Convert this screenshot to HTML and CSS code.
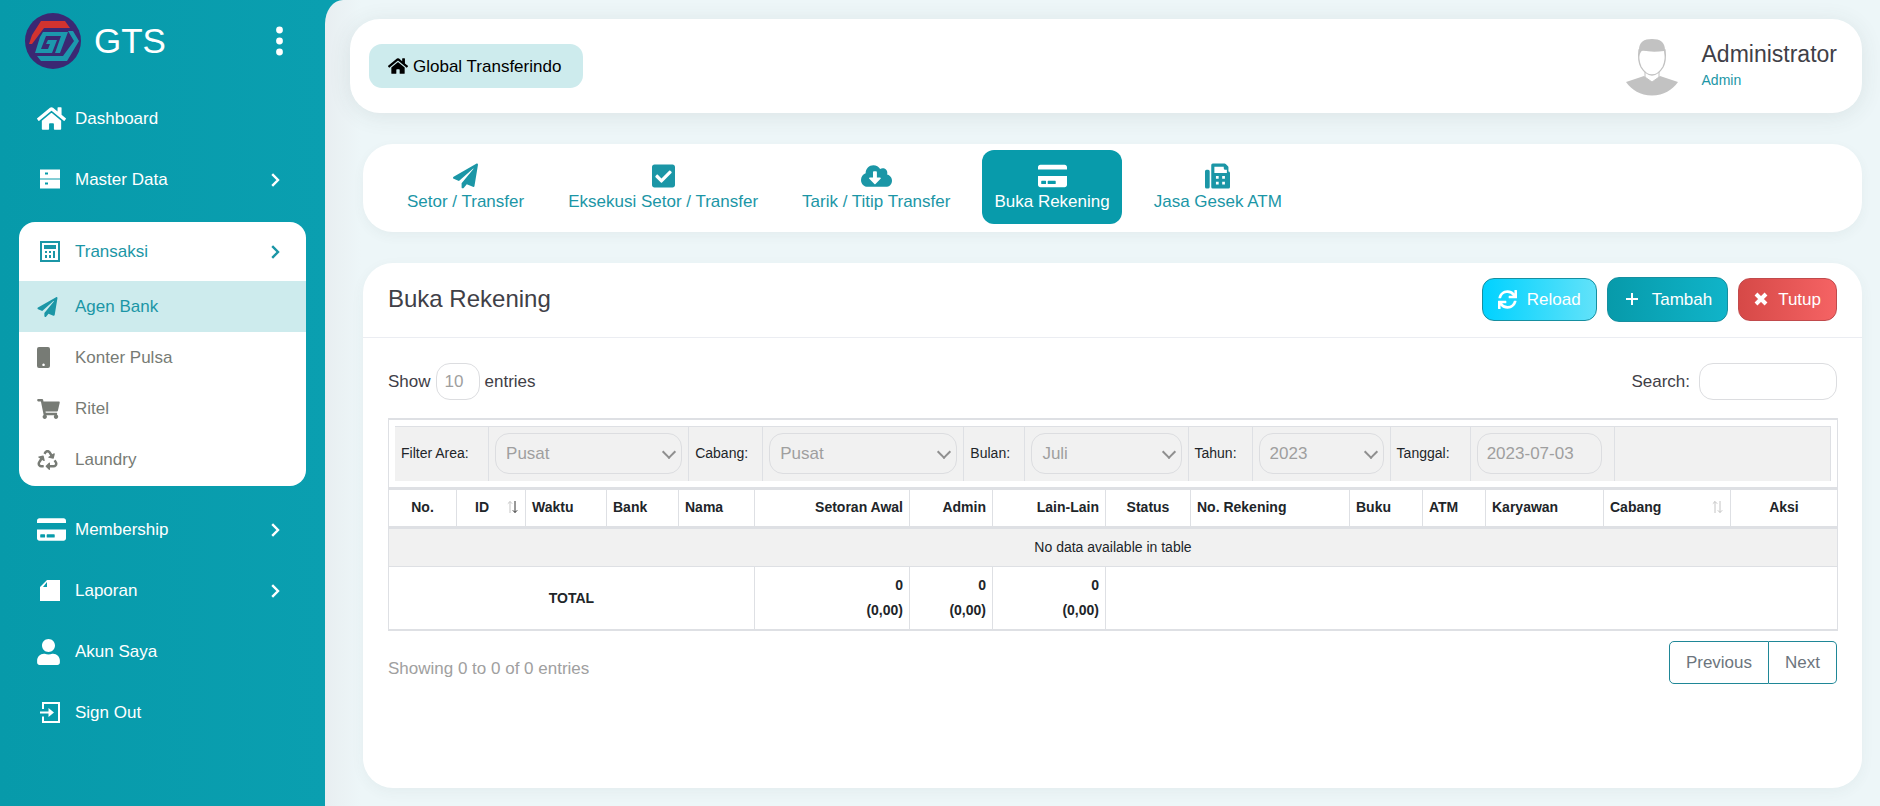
FILE: index.html
```html
<!DOCTYPE html>
<html lang="id">
<head>
<meta charset="utf-8">
<title>GTS - Buka Rekening</title>
<link rel="stylesheet" href="styles.css">
</head>
<body>
<svg class="sprite" aria-hidden="true">
  <symbol id="home" viewBox="0 32 576 448"><path d="M280.37 148.26L96 300.11V464a16 16 0 0 0 16 16l112.06-.29a16 16 0 0 0 15.92-16V368a16 16 0 0 1 16-16h64a16 16 0 0 1 16 16v95.64a16 16 0 0 0 16 16.05L464 480a16 16 0 0 0 16-16V300L295.67 148.26a12.19 12.19 0 0 0-15.3 0zM571.6 251.47L488 182.56V44.05a12 12 0 0 0-12-12h-56a12 12 0 0 0-12 12v72.61L318.47 43a48 48 0 0 0-61 0L4.34 251.47a12 12 0 0 0-1.6 16.9l25.5 31A12 12 0 0 0 45.15 301l235.22-193.74a12.19 12.19 0 0 1 15.3 0L530.9 301a12 12 0 0 0 16.9-1.6l25.5-31a12 12 0 0 0-1.7-16.93z"/></symbol>
  <symbol id="plane" viewBox="0 0 512 512"><path d="M476 3.2L12.5 270.6c-18.1 10.4-15.8 35.6 2.2 43.2L121 358.4l287.3-253.2c5.5-4.9 13.3 2.6 8.6 8.3L176 407v80.5c0 23.6 28.5 32.9 42.5 15.8L282 426l124.6 52.2c14.2 6 30.4-2.9 33-18.2l72-432C515 7.8 493.3-6.8 476 3.2z"/></symbol>
  <symbol id="card" viewBox="0 32 576 448"><path d="M0 432c0 26.5 21.5 48 48 48h480c26.5 0 48-21.5 48-48V256H0v176zm192-68c0-6.6 5.4-12 12-12h136c6.6 0 12 5.4 12 12v40c0 6.6-5.4 12-12 12H204c-6.6 0-12-5.4-12-12v-40zm-128 0c0-6.6 5.4-12 12-12h72c6.6 0 12 5.4 12 12v40c0 6.6-5.4 12-12 12H76c-6.6 0-12-5.4-12-12v-40zM576 80v48H0V80c0-26.5 21.5-48 48-48h480c26.5 0 48 21.5 48 48z"/></symbol>
  <symbol id="server" viewBox="0 0 20 20"><path fill-rule="evenodd" d="M0 0h20v9H0zM5 3v2h3V3zM0 10h20v9H0zM5 13v2h3v-2z"/></symbol>
  <symbol id="calculator" viewBox="0 0 20 21"><path fill-rule="evenodd" d="M0 0h20v21H0zM2 2v17h16V2zM4 4h12v4H4zM5 10h2v2H5zM9 10h2v2H9zM13 10h2v7h-2zM5 14h2v3H5zM9 14h2v3H9z"/></symbol>
  <symbol id="mobile" viewBox="0 0 13 21"><path fill-rule="evenodd" d="M2 0h9a2 2 0 0 1 2 2v17a2 2 0 0 1-2 2H2a2 2 0 0 1-2-2V2a2 2 0 0 1 2-2zM6.500 16.500a1.300 1.300 0 1 0 .1 0z"/></symbol>
  <symbol id="cart" viewBox="0 0 576 512"><path d="M528.12 301.319l47.273-208C578.806 78.301 567.391 64 551.99 64H159.208l-9.166-44.81C147.758 8.021 137.93 0 126.529 0H24C10.745 0 0 10.745 0 24v16c0 13.255 10.745 24 24 24h69.883l70.248 343.435C147.325 417.1 136 435.222 136 456c0 30.928 25.072 56 56 56s56-25.072 56-56c0-15.674-6.447-29.835-16.824-40h209.647C430.447 426.165 424 440.326 424 456c0 30.928 25.072 56 56 56s56-25.072 56-56c0-22.172-12.888-41.332-31.579-50.405l5.517-24.276c3.413-15.018-8.002-29.319-23.403-29.319H218.117l-6.545-32h293.145c11.206 0 20.92-7.754 23.403-18.681z"/></symbol>
  <symbol id="recycle" viewBox="0 0 512 512"><path d="M184.561 261.903c3.232 13.997-12.123 24.635-24.068 17.168l-40.736-25.455-50.867 81.402C55.606 356.273 70.96 384 96.012 384H148c6.627 0 12 5.373 12 12v40c0 6.627-5.373 12-12 12H96.115c-75.334 0-121.302-83.048-81.408-146.88l50.822-81.388-40.725-25.448c-12.081-7.547-8.966-25.961 4.879-29.158l110.237-25.45c8.611-1.988 17.201 3.381 19.189 11.99l25.452 110.237zm98.561-182.915l41.289 66.076-40.74 25.457c-12.051 7.528-9 25.953 4.879 29.158l110.237 25.45c8.672 1.999 17.215-3.438 19.189-11.99l25.45-110.237c3.197-13.844-11.99-24.719-24.068-17.168l-40.687 25.424-41.263-66.082c-37.521-60.033-125.209-60.171-162.816 0l-17.963 28.766c-3.51 5.62-1.8 13.021 3.82 16.533l33.919 21.195c5.62 3.512 13.024 1.803 16.536-3.817l17.961-28.743c12.712-20.341 41.973-19.676 54.257-.022zM497.288 301.12l-27.515-44.065c-3.511-5.623-10.916-7.334-16.538-3.821l-33.861 21.159c-5.62 3.512-7.33 10.915-3.818 16.536l27.564 44.112c13.257 21.211-2.057 48.96-27.136 48.96H320V336.02c0-14.213-17.242-21.383-27.313-11.313l-80 79.981c-6.249 6.248-6.249 16.379 0 22.627l80 79.989C302.689 517.308 320 510.3 320 495.989V448h95.88c75.274 0 121.335-82.997 81.408-146.88z"/></symbol>
  <symbol id="file" viewBox="0 0 20 21"><path fill-rule="evenodd" d="M7 0h13v21H0V7zM7 2L3 7h4z"/></symbol>
  <symbol id="user" viewBox="0 0 448 512"><path d="M224 256c70.7 0 128-57.3 128-128S294.7 0 224 0 96 57.3 96 128s57.3 128 128 128zm89.6 32h-16.7c-22.2 10.2-46.9 16-72.9 16s-50.6-5.8-72.9-16h-16.7C60.2 288 0 348.2 0 422.4V464c0 26.5 21.5 48 48 48h352c26.5 0 48-21.5 48-48v-41.6c0-74.2-60.2-134.4-134.4-134.4z"/></symbol>
  <symbol id="signout" viewBox="0 0 20 21"><path d="M2 0h18v21H2v-6.500h2V19h14V2H4v5H2zM0 9.500h8.500V6l5.500 4.500L8.500 15v-3.500H0z"/></symbol>
  <symbol id="chevron" viewBox="0 0 9 14"><path d="M1.200 1.200L7 7l-5.800 5.800" fill="none" stroke="currentColor" stroke-width="2.400"/></symbol>
  <symbol id="dots" viewBox="0 0 8 30"><circle cx="4" cy="4" r="3.400"/><circle cx="4" cy="15" r="3.400"/><circle cx="4" cy="26" r="3.400"/></symbol>
  <symbol id="check" viewBox="0 32 448 448"><path d="M400 480H48c-26.510 0-48-21.490-48-48V80c0-26.510 21.490-48 48-48h352c26.510 0 48 21.490 48 48v352c0 26.510-21.490 48-48 48zm-204.686-98.059l184-184c6.248-6.248 6.248-16.379 0-22.627l-22.627-22.627c-6.248-6.248-16.379-6.249-22.628 0L184 302.745l-70.059-70.059c-6.248-6.248-16.379-6.248-22.628 0l-22.627 22.627c-6.248 6.248-6.248 16.379 0 22.627l104 104c6.249 6.250 16.379 6.250 22.628.001z"/></symbol>
  <symbol id="cloud" viewBox="0 32 640 448"><path d="M537.6 226.6c4.1-10.7 6.4-22.4 6.4-34.6 0-53-43-96-96-96-19.7 0-38.1 6-53.3 16.2C367 64.2 315.3 32 256 32c-88.4 0-160 71.6-160 160 0 2.7.1 5.4.2 8.1C40.2 219.8 0 273.2 0 336c0 79.5 64.5 144 144 144h368c70.7 0 128-57.3 128-128 0-61.9-44-113.6-102.4-125.4zm-132.9 88.7L299.3 420.7c-6.2 6.2-16.4 6.2-22.6 0L171.3 315.3c-10.1-10.1-2.9-27.3 11.3-27.3H248V176c0-8.8 7.200-16 16-16h48c8.800 0 16 7.200 16 16v112h65.400c14.200 0 21.400 17.200 11.300 27.300z"/></symbol>
  <symbol id="fax" viewBox="0 0 512 512"><path fill-rule="evenodd" d="M64 128H32a32 32 0 0 0-32 32v320a32 32 0 0 0 32 32h32a32 32 0 0 0 32-32V160a32 32 0 0 0-32-32zM480 164V78a32 32 0 0 0-9-23L425 9a32 32 0 0 0-23-9H160a32 32 0 0 0-32 32v448a32 32 0 0 0 32 32h320a32 32 0 0 0 32-32V192a32 32 0 0 0-32-28zM192 64h192v32a32 32 0 0 0 32 32h32v64H192zM224 256h56v56h-56zM352 256h56v56h-56zM224 376h56v56h-56zM352 376h56v56h-56z"/></symbol>
  <symbol id="sync" viewBox="0 0 512 512"><path d="M440.65 12.57l4 82.77A247.16 247.16 0 0 0 255.83 8C134.73 8 33.91 94.92 12.29 209.82A12 12 0 0 0 24.09 224h49.05a12 12 0 0 0 11.67-9.26 175.91 175.91 0 0 1 317-56.94l-101.46-4.86a12 12 0 0 0-12.57 12v47.41a12 12 0 0 0 12 12H500a12 12 0 0 0 12-12V12a12 12 0 0 0-12-12h-47.37a12 12 0 0 0-11.98 12.57zM255.83 432a175.61 175.61 0 0 1-146-77.8l101.8 4.87a12 12 0 0 0 12.57-12v-47.4a12 12 0 0 0-12-12H12a12 12 0 0 0-12 12V500a12 12 0 0 0 12 12h47.35a12 12 0 0 0 12-12.6l-4.15-82.57A247.17 247.17 0 0 0 255.83 504c121.11 0 221.93-86.92 243.55-201.82a12 12 0 0 0-11.8-14.18h-49.05a12 12 0 0 0-11.67 9.26A175.86 175.86 0 0 1 255.83 432z"/></symbol>
  <symbol id="plus" viewBox="0 0 12 12"><path d="M5 0h2v5h5v2H7v5H5V7H0V5h5z"/></symbol>
  <symbol id="times" viewBox="0 0 14 14"><path d="M2 2l10 10M12 2L2 12" stroke="currentColor" stroke-width="4"/></symbol>
  <symbol id="sort" viewBox="0 0 12 14"><path class="sort-up" d="M3 13V1.500M.8 3.700L3 1.500l2.200 2.200"/><path class="sort-down" d="M8 1v11.500M5.800 10.300L8 12.500l2.200-2.200"/></symbol>
</svg>

<aside class="sidebar">
  <div class="brand">
    <svg class="logo" viewBox="0 0 56 56" role="img" aria-label="GT">
      <circle cx="28" cy="28" r="28" fill="#3b2873"/>
      <path d="M16 8h24l5 7H19L7 31H4l3-9z" fill="#d2332f"/>
      <path d="M43 18h5l6 10-12 20H16l-4-5h26l11-15z" fill="#1c98ad"/>
      <path d="M18 19h25l-8 21h-5l6-17H21l-5 13h7l2-5h-4l2-4h9l-5 13H10l5-16z" fill="#1c98ad"/>
    </svg>
    <span class="brand-name">GTS</span>
    <button class="dots-button" aria-label="Menu"><svg><use href="#dots"/></svg></button>
  </div>
  <nav>
    <ul class="menu">
      <li><a class="item" href="#"><span class="icon"><svg class="i-home"><use href="#home"/></svg></span>Dashboard</a></li>
      <li><a class="item" href="#"><span class="icon inset"><svg class="i-square"><use href="#server"/></svg></span>Master Data<svg class="chevron"><use href="#chevron"/></svg></a></li>
      <li class="group">
        <a class="item" href="#"><span class="icon inset"><svg class="i-square"><use href="#calculator"/></svg></span>Transaksi<svg class="chevron"><use href="#chevron"/></svg></a>
        <ul class="submenu">
          <li><a class="subitem active" href="#"><span class="icon"><svg class="i-plane"><use href="#plane"/></svg></span>Agen Bank</a></li>
          <li><a class="subitem" href="#"><span class="icon"><svg class="i-mobile"><use href="#mobile"/></svg></span>Konter Pulsa</a></li>
          <li><a class="subitem" href="#"><span class="icon"><svg class="i-cart"><use href="#cart"/></svg></span>Ritel</a></li>
          <li><a class="subitem" href="#"><span class="icon"><svg class="i-plane"><use href="#recycle"/></svg></span>Laundry</a></li>
        </ul>
      </li>
      <li><a class="item" href="#"><span class="icon"><svg class="i-home"><use href="#card"/></svg></span>Membership<svg class="chevron"><use href="#chevron"/></svg></a></li>
      <li><a class="item" href="#"><span class="icon inset"><svg class="i-square"><use href="#file"/></svg></span>Laporan<svg class="chevron"><use href="#chevron"/></svg></a></li>
      <li><a class="item" href="#"><span class="icon"><svg class="i-user"><use href="#user"/></svg></span>Akun Saya</a></li>
      <li><a class="item" href="#"><span class="icon inset"><svg class="i-square"><use href="#signout"/></svg></span>Sign Out</a></li>
    </ul>
  </nav>
</aside>

<main class="main">
  <header class="topbar">
    <a class="company" href="#"><svg><use href="#home"/></svg>Global Transferindo</a>
    <div class="profile">
      <svg class="avatar" viewBox="0 -2 52 60" role="img" aria-label="Avatar">
        <path d="M0 44l18-6 8 6 8-6 18 6c-6 8-14 13.500-26 13.500S6 52 0 44z" fill="#c2c2c2"/>
        <path d="M19 33v6l7 5 7-5v-6" fill="#fff" stroke="#c2c2c2"/>
        <path d="M13 12c-1 8 0 13 2 17 3 5 7 8 11 8s8-3 11-8c2-4 3-9 2-17z" fill="#fff" stroke="#c2c2c2" stroke-width="1.300"/>
        <path d="M13 19V12C13 4 18 1 26 1s13 3 13 11v7l-1-6c-8 1-16 1-21-1-2 1-3 3-4 7z" fill="#c2c2c2"/>
      </svg>
      <div><div class="profile-name">Administrator</div><div class="profile-role">Admin</div></div>
    </div>
  </header>

  <nav class="tabs">
    <a class="tab" href="#"><svg class="t-plane"><use href="#plane"/></svg>Setor / Transfer</a>
    <a class="tab" href="#"><svg class="t-check"><use href="#check"/></svg>Eksekusi Setor / Transfer</a>
    <a class="tab" href="#"><svg class="t-cloud"><use href="#cloud"/></svg>Tarik / Titip Transfer</a>
    <a class="tab active" href="#"><svg class="t-card"><use href="#card"/></svg>Buka Rekening</a>
    <a class="tab" href="#"><svg class="t-fax"><use href="#fax"/></svg>Jasa Gesek ATM</a>
  </nav>

  <section class="panel">
    <div class="panel-head">
      <h1>Buka Rekening</h1>
      <div class="actions">
        <button class="btn reload"><svg><use href="#sync"/></svg>Reload</button>
        <button class="btn add"><svg><use href="#plus"/></svg>Tambah</button>
        <button class="btn close"><svg><use href="#times"/></svg>Tutup</button>
      </div>
    </div>
    <div class="panel-body">
      <div class="controls">
        <div class="length"><label for="length">Show</label><select id="length"><option>10</option></select><span>entries</span></div>
        <div class="search"><label for="search">Search:</label><input id="search" type="search"></div>
      </div>
      <table class="data">
        <colgroup><col class="c-no"><col class="c-id"><col class="c-waktu"><col class="c-bank"><col class="c-nama"><col class="c-setoran"><col class="c-admin"><col class="c-lain"><col class="c-status"><col class="c-rek"><col class="c-buku"><col class="c-atm"><col class="c-kary"><col class="c-cabang"><col class="c-aksi"></colgroup>
        <thead>
          <tr><td class="filter-cell" colspan="15">
            <table class="filters">
              <colgroup><col class="f-1"><col class="f-2"><col class="f-3"><col class="f-4"><col class="f-5"><col class="f-6"><col class="f-7"><col class="f-8"><col class="f-9"><col class="f-10"><col class="f-11"></colgroup>
              <tbody><tr>
                <td><label for="area">Filter Area:</label></td>
                <td><span class="pick"><select id="area"><option>Pusat</option></select></span></td>
                <td><label for="cabang">Cabang:</label></td>
                <td><span class="pick"><select id="cabang"><option>Pusat</option></select></span></td>
                <td><label for="bulan">Bulan:</label></td>
                <td><span class="pick"><select id="bulan"><option>Juli</option></select></span></td>
                <td><label for="tahun">Tahun:</label></td>
                <td><span class="pick"><select id="tahun"><option>2023</option></select></span></td>
                <td><label for="tanggal">Tanggal:</label></td>
                <td><input id="tanggal" type="text" value="2023-07-03"></td>
                <td></td>
              </tr></tbody>
            </table>
          </td></tr>
          <tr>
            <th class="center">No.</th>
            <th class="center"><span class="sortable">ID<svg class="sort desc"><use href="#sort"/></svg></span></th>
            <th>Waktu</th><th>Bank</th><th>Nama</th>
            <th class="right">Setoran Awal</th><th class="right">Admin</th><th class="right">Lain-Lain</th>
            <th class="center">Status</th><th>No. Rekening</th><th>Buku</th><th>ATM</th><th>Karyawan</th>
            <th><span class="sortable">Cabang<svg class="sort"><use href="#sort"/></svg></span></th>
            <th class="center">Aksi</th>
          </tr>
        </thead>
        <tbody><tr><td class="empty" colspan="15">No data available in table</td></tr></tbody>
        <tfoot><tr>
          <th class="center" colspan="5">TOTAL</th>
          <th class="right">0<br>(0,00)</th><th class="right">0<br>(0,00)</th><th class="right">0<br>(0,00)</th>
          <th colspan="7"></th>
        </tr></tfoot>
      </table>
      <div class="table-foot">
        <div class="info">Showing 0 to 0 of 0 entries</div>
        <div class="pager"><button>Previous</button><button>Next</button></div>
      </div>
    </div>
  </section>
</main>
</body>
</html>
```
FILE: styles.css
```css
* { box-sizing: border-box; }

body {
  margin: 0;
  min-height: 100vh;
  display: flex;
  background: linear-gradient(90deg, #079aaa, #0a9fb0 325px);
  font: 17px/25px "Liberation Sans", Arial, sans-serif;
  color: #3f4047;
}

a { color: inherit; text-decoration: none; }
ul { margin: 0; padding: 0; list-style: none; }
button, input, select { font: inherit; margin: 0; }
svg { fill: currentColor; display: block; flex: none; }
.sprite { display: none; }

/* Sidebar */
.sidebar { width: 325px; flex: none; color: #fff; }
.brand { display: flex; align-items: center; height: 88px; padding: 0 41px 6px 25px; }
.logo { width: 56px; height: 56px; }
.brand-name { margin-left: 13px; font-size: 35px; line-height: 40px; }
.dots-button { margin-left: auto; padding: 0; border: 0; background: none; color: #fff; }
.dots-button svg { width: 9px; height: 30px; }

.item, .subitem { display: flex; align-items: center; padding-left: 37px; }
.item { height: 61px; padding-right: 45px; }
.icon { width: 38px; flex: none; }
.icon.inset { padding-left: 3px; }
.chevron { width: 9px; height: 14px; margin-left: auto; }
.group { margin: 12px 19px 13px; padding-bottom: 1px; border-radius: 16px; overflow: hidden; background: #fff; color: #1b96a6; }
.group .item { height: 59px; padding-left: 18px; padding-right: 26px; }
.subitem { height: 51px; padding-left: 18px; color: #777b75; }
.subitem.active { background: #cdebed; color: #1b96a6; }

.i-home { width: 29px; height: 23px; }
.i-square { width: 20px; height: 21px; }
.i-plane { width: 21px; height: 20px; }
.i-mobile { width: 13px; height: 21px; }
.i-cart { width: 23px; height: 20px; }
.i-user { width: 23px; height: 26px; }

/* Main area */
.main {
  flex: 1;
  min-width: 0;
  display: flex;
  flex-direction: column;
  gap: 31px;
  padding: 19px 18px 18px 25px;
  border-top-left-radius: 18px 24px;
  background: linear-gradient(90deg, #e8eef1, #edf6f8 36px);
}
.topbar, .tabs, .panel { background: #fff; border-radius: 30px; }

.topbar {
  display: flex;
  align-items: center;
  justify-content: space-between;
  height: 94px;
  padding: 0 25px 0 19px;
  box-shadow: 0 3px 22px rgba(60, 70, 70, .1);
}
.company {
  display: flex;
  align-items: center;
  gap: 5px;
  height: 44px;
  padding: 0 22px 0 19px;
  border-radius: 13px;
  background: #cdebed;
  color: #000;
}
.company svg { width: 20px; height: 16px; }
.profile { display: flex; align-items: center; gap: 24px; }
.avatar { width: 52px; height: 60px; }
.profile-name { font-size: 23px; line-height: 28px; }
.profile-role { font-size: 14px; line-height: 24px; color: #1b96a6; }

.tabs {
  display: flex;
  gap: 20px;
  height: 88px;
  margin-left: 13px;
  padding: 6px 32px;
  box-shadow: 0 4px 12px rgba(60, 70, 70, .05);
}
.tab {
  display: flex;
  flex-direction: column;
  align-items: center;
  height: 74px;
  padding: 13px 12px 0;
  border-radius: 12px;
  color: #1b96a6;
}
.tab svg { height: 26px; }
.tab.active { background: #089bab; color: #fff; }
.t-plane { width: 25px; }
.t-check { width: 23px; }
.t-cloud { width: 31px; }
.t-card { width: 29px; }
.t-fax { width: 25px; }

/* Panel */
.panel {
  flex: 1;
  margin-left: 13px;
  box-shadow: 0 4px 14px rgba(60, 70, 70, .05);
}
.panel-head {
  display: flex;
  align-items: center;
  justify-content: space-between;
  height: 75px;
  padding: 0 25px 2px;
  border-bottom: 1px solid #ebedf2;
}
h1 { margin: 0; font-size: 24px; line-height: 32px; font-weight: 400; }
.actions { display: flex; align-items: center; gap: 10px; }
.btn {
  display: flex;
  align-items: center;
  height: 43px;
  padding: 0 15px;
  border: 1px solid #168fa0;
  border-radius: 12px;
  color: #fff;
}
.reload { gap: 10px; background: linear-gradient(90deg, #00d2ff, #62e2f9); }
.reload svg { width: 19px; height: 19px; }
.add { height: 45px; gap: 14px; padding-left: 18px; background: linear-gradient(90deg, #079aaa, #10b4c9); }
.add svg { width: 12px; height: 12px; }
.close { gap: 10px; border-color: #c14a4c; background: linear-gradient(90deg, #d64947, #f56364); }
.close svg { width: 14px; height: 14px; }

.panel-body { padding: 25px 25px 0; }
.controls { display: flex; justify-content: space-between; height: 37px; }
.length, .search { display: flex; align-items: center; gap: 5px; }
.search { gap: 9px; }
.length select, .search input, .filters select, .filters input {
  appearance: none;
  border: 1px solid #dcdde0;
  border-radius: 14px;
  background: transparent;
  color: #9f9f9f;
}
.length select { width: 44px; height: 37px; padding: 0 8px; }
.search input { width: 138px; height: 37px; padding: 0 10px; }

.data {
  width: 100%;
  margin-top: 18px;
  table-layout: fixed;
  border: solid #dee0e4;
  border-width: 2px 1px;
  border-spacing: 0;
  font-size: 14px;
  color: #212529;
}
.data th, .data td { padding: 0 6px; text-align: left; }
.data thead th { height: 39px; padding-bottom: 2px; border-bottom: 3px solid #dee0e4; }
.data th + th { border-left: 1px solid #dee0e4; }
.data .right { text-align: right; }
.data .center { text-align: center; }
.data .filter-cell { padding: 6px; border-bottom: 3px solid #dee0e4; }
.data .empty { height: 38px; text-align: center; background: #f1f1f1; border-bottom: 1px solid #dee0e4; }
.data tfoot th { padding: 6px; }

.c-no { width: 67px; }
.c-id { width: 69px; }
.c-waktu { width: 81px; }
.c-bank { width: 72px; }
.c-nama { width: 76px; }
.c-setoran { width: 155px; }
.c-admin { width: 83px; }
.c-lain { width: 113px; }
.c-status { width: 85px; }
.c-rek { width: 159px; }
.c-buku { width: 73px; }
.c-atm { width: 63px; }
.c-kary { width: 118px; }
.c-cabang { width: 127px; }
.c-aksi { width: 107px; }

.sortable { display: flex; align-items: center; justify-content: space-between; }
.center .sortable { padding-left: 12px; }
.sort { width: 12px; height: 14px; fill: none; stroke: #c4c4c4; }
.sort.desc { --down: #333; }
.sort-down { stroke: var(--down, #c4c4c4); }

.filters { width: 100%; table-layout: fixed; border-spacing: 0; background: #f1f1f1; border: solid #dee0e4; border-width: 1px 1px 0 0; }
.filters td { height: 54px; padding: 0 6px 1px; }
.filters td + td { border-left: 1px solid #dee0e4; }
.filters select, .filters input { width: 100%; height: 41px; padding: 0 10px; font-size: 17px; display: block; }
.filters input { width: 125px; padding: 0 9px; }
.pick { display: block; position: relative; }
.pick::after {
  content: "";
  position: absolute;
  right: 8px;
  top: 14px;
  width: 8px;
  height: 8px;
  border: solid #8f8f8f;
  border-width: 0 2px 2px 0;
  transform: rotate(45deg);
  pointer-events: none;
}
.f-1 { width: 93px; }
.f-2 { width: 200px; }
.f-3 { width: 74px; }
.f-4 { width: 201px; }
.f-5 { width: 61px; }
.f-6 { width: 163px; }
.f-7 { width: 64px; }
.f-8 { width: 138px; }
.f-9 { width: 80px; }
.f-10 { width: 144px; }
.f-11 { width: 216px; }

.table-foot { display: flex; justify-content: space-between; padding-top: 10px; }
.info { padding-top: 15px; color: #a0a0a0; }
.pager { display: flex; }
.pager button { height: 43px; padding: 0 16px; border: 1px solid #1f8797; background: #fff; color: #6c757d; }
.pager button:first-child { border-radius: 5px 0 0 5px; }
.pager button:last-child { border-left: 0; border-radius: 0 5px 5px 0; }
```
